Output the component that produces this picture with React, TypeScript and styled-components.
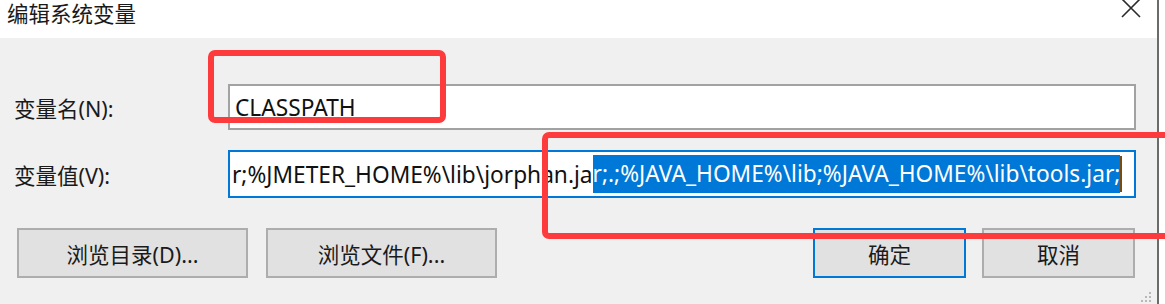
import styled, { createGlobalStyle } from 'styled-components';

const GlobalStyle = createGlobalStyle`
  html, body {
    margin: 0;
    padding: 0;
    background: #ffffff;
  }
  body {
    font-family: 'Noto Sans', 'Noto Sans CJK SC', sans-serif;
  }
`;

const Page = styled.div`
  position: relative;
  width: 1165px;
  height: 304px;
  overflow: hidden;
  background: #ffffff;
`;

const Dialog = styled.div`
  width: 1157px;
  height: 304px;
  border-right: 2px solid #6b6b6b;
  display: flex;
  flex-direction: column;
`;

const TitleBar = styled.div`
  height: 38px;
  background: #ffffff;
  display: flex;
  align-items: flex-start;
  justify-content: space-between;
  padding: 0 16px 0 7px;
`;

const Title = styled.div`
  font-family: 'Noto Sans CJK SC', sans-serif;
  font-size: 21.5px;
  line-height: 26px;
  color: #1a1a1a;
`;

const CloseIcon = styled.svg`
  width: 20px;
  height: 20px;
  margin-top: -2px;
`;

const Body = styled.div`
  flex: 1;
  background: #f0f0f0;
  padding: 46px 21px 0 14px;
  display: flex;
  flex-direction: column;
`;

const FieldRow = styled.div<{ $gap: number }>`
  display: flex;
  align-items: center;
  margin-bottom: ${(p) => p.$gap}px;
`;

const Label = styled.div`
  width: 214px;
  font-size: 21.5px;
  color: #1a1a1a;
  font-family: 'Noto Sans', 'Noto Sans CJK SC', sans-serif;
`;

const TextBox = styled.div<{ $focused?: boolean }>`
  width: 908px;
  height: ${(p) => (p.$focused ? 48 : 46)}px;
  box-sizing: border-box;
  background: #ffffff;
  border: 2px solid ${(p) => (p.$focused ? '#0078d7' : '#a2a2a2')};
  display: flex;
  align-items: center;
  padding-left: ${(p) => (p.$focused ? 2 : 5)}px;
  font-size: 22.7px;
  color: #111;
  white-space: nowrap;
  overflow: hidden;
`;

const Selected = styled.span`
  background: #0078d7;
  color: #ffffff;
  line-height: 38px;
`;

const Caret = styled.span`
  display: inline-block;
  width: 2px;
  height: 36px;
  background: #7a4a10;
  vertical-align: middle;
`;

const ButtonRow = styled.div`
  display: flex;
  align-items: center;
  padding-left: 3px;
`;

const Button = styled.div<{ $primary?: boolean }>`
  width: 231px;
  height: 50px;
  box-sizing: border-box;
  background: #e1e1e1;
  border: 2px solid ${(p) => (p.$primary ? '#0078d7' : '#adadad')};
  display: flex;
  align-items: center;
  justify-content: center;
  font-size: 21.5px;
  color: #1a1a1a;
  font-family: 'Noto Sans', 'Noto Sans CJK SC', sans-serif;
`;

const SmallButton = styled(Button)`
  width: 153px;
`;

const Spacer = styled.div<{ $w: number }>`
  width: ${(p) => p.$w}px;
  flex-shrink: 0;
`;

const Grip = styled.svg`
  position: absolute;
  right: 13px;
  bottom: 0;
  width: 14px;
  height: 14px;
`;

const Annotation = styled.div`
  position: absolute;
  box-sizing: border-box;
  border: 6px solid #fd3a3c;
  border-radius: 7px;
  pointer-events: none;
`;

export default function App() {
  return (
    <>
      <GlobalStyle />
      <Page>
        <Dialog>
          <TitleBar>
            <Title>编辑系统变量</Title>
            <CloseIcon viewBox='0 0 20 20'>
              <path d='M1 1 L19 19 M19 1 L1 19' stroke='#2b2b2b' strokeWidth='1.6' />
            </CloseIcon>
          </TitleBar>
          <Body>
            <FieldRow $gap={20}>
              <Label>变量名(N):</Label>
              <TextBox>CLASSPATH</TextBox>
            </FieldRow>
            <FieldRow $gap={30}>
              <Label>变量值(V):</Label>
              <TextBox $focused>
                r;%JMETER_HOME%\lib\jorphan.ja
                <Selected>r;.;%JAVA_HOME%\lib;%JAVA_HOME%\lib\tools.jar;</Selected>
                <Caret />
              </TextBox>
            </FieldRow>
            <ButtonRow>
              <Button>浏览目录(D)...</Button>
              <Spacer $w={18} />
              <Button>浏览文件(F)...</Button>
              <Spacer $w={316} />
              <SmallButton $primary>确定</SmallButton>
              <Spacer $w={16} />
              <SmallButton>取消</SmallButton>
            </ButtonRow>
          </Body>
        </Dialog>
        <Grip viewBox='0 0 14 14'>
          <g fill='#b8b8b8'>
            <rect x='11' y='2' width='2' height='2' />
            <rect x='7' y='6' width='2' height='2' />
            <rect x='11' y='6' width='2' height='2' />
            <rect x='3' y='10' width='2' height='2' />
            <rect x='7' y='10' width='2' height='2' />
            <rect x='11' y='10' width='2' height='2' />
          </g>
        </Grip>
        <Annotation style={{ left: 208, top: 50, width: 238, height: 73 }} />
        <Annotation style={{ left: 542, top: 132, width: 640, height: 107 }} />
      </Page>
    </>
  );
}
